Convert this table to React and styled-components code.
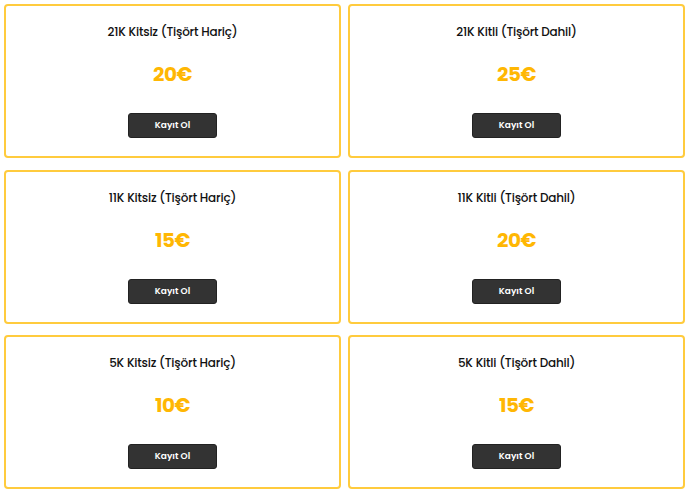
import React from "react";
import styled, { createGlobalStyle } from "styled-components";

const Global = createGlobalStyle`
  html, body { margin: 0; padding: 0; background: #fff; }
  body { font-family: Poppins, Inter, "Noto Sans", sans-serif; }
`;

const Grid = styled.div`
  display: grid;
  grid-template-columns: 337px 337px;
  column-gap: 7px;
  row-gap: 11.5px;
  padding: 4px;
`;

const Card = styled.div`
  box-sizing: border-box;
  height: 154px;
  border: 2px solid #ffcb3d;
  border-radius: 4px;
  display: flex;
  flex-direction: column;
  align-items: center;
  padding-top: 16px;
`;

const Title = styled.div`
  font-size: 12px;
  font-weight: 500;
  line-height: 20px;
  color: #111;
  letter-spacing: -0.2px;
`;

const Price = styled.div`
  margin-top: 18px;
  font-size: 20px;
  font-weight: 700;
  line-height: 28px;
  color: #ffb703;
  letter-spacing: -0.5px;
`;

const Button = styled.button`
  margin-top: 25px;
  width: 89px;
  height: 25px;
  border: 1px solid #222;
  border-radius: 3px;
  background: #333333;
  color: #fff;
  font-family: inherit;
  font-size: 9px;
  font-weight: 600;
  padding: 0;
  cursor: pointer;
`;

const items = [
  { title: "21K Kitsiz (Tişört Hariç)", price: "20€" },
  { title: "21K Kitli (Tişört Dahil)", price: "25€" },
  { title: "11K Kitsiz (Tişört Hariç)", price: "15€" },
  { title: "11K Kitli (Tişört Dahil)", price: "20€" },
  { title: "5K Kitsiz (Tişört Hariç)", price: "10€" },
  { title: "5K Kitli (Tişört Dahil)", price: "15€" },
];

export default function App() {
  return (
    <>
      <Global />
      <Grid>
        {items.map((it) => (
          <Card key={it.title}>
            <Title>{it.title}</Title>
            <Price>{it.price}</Price>
            <Button>Kayıt Ol</Button>
          </Card>
        ))}
      </Grid>
    </>
  );
}
